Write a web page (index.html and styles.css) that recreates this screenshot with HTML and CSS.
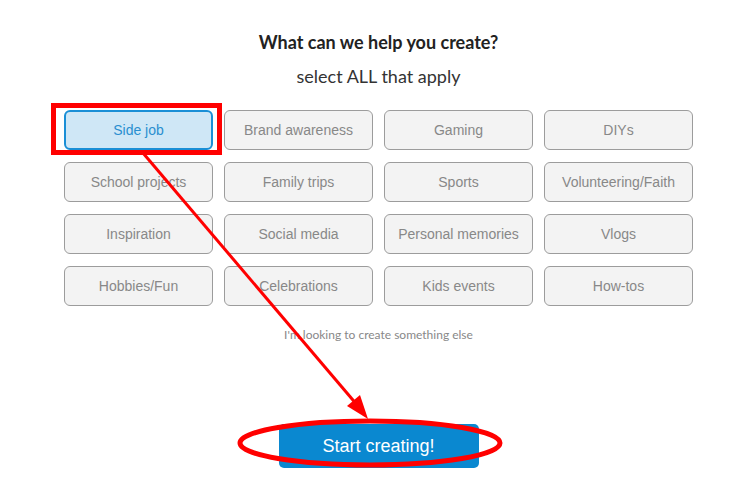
FILE: index.html
```html
<!DOCTYPE html>
<html lang="en">
<head>
    <meta charset="UTF-8">
    <meta name="viewport" content="width=device-width, initial-scale=1.0">
    <title>What can we help you create?</title>
    <link rel="stylesheet" href="styles.css">
</head>
<body>
    <div class="page">
        <div class="container">
            <h3 class="title">What can we help you create?</h3>
            <p class="subtitle">select ALL that apply</p>
            <div class="options">
                <button class="option selected">Side job</button>
                <button class="option">Brand awareness</button>
                <button class="option">Gaming</button>
                <button class="option">DIYs</button>
                <button class="option">School projects</button>
                <button class="option">Family trips</button>
                <button class="option">Sports</button>
                <button class="option">Volunteering/Faith</button>
                <button class="option">Inspiration</button>
                <button class="option">Social media</button>
                <button class="option">Personal memories</button>
                <button class="option">Vlogs</button>
                <button class="option">Hobbies/Fun</button>
                <button class="option">Celebrations</button>
                <button class="option">Kids events</button>
                <button class="option">How-tos</button>
            </div>
            <a class="other-link">I'm looking to create something else</a>
            <button class="start-button">Start creating!</button>
        </div>

        <!-- annotation drawn over the page -->
        <svg class="annotations" width="741" height="483" viewBox="0 0 741 483">
            <rect x="53.5" y="105.5" width="166" height="47" fill="none" stroke="#ff0000" stroke-width="5"/>
            <line x1="143" y1="153" x2="358" y2="406" stroke="#ff0000" stroke-width="3"/>
            <polygon points="368,419 347,406 360,395" fill="#ff0000"/>
            <ellipse cx="370" cy="443" rx="130" ry="22" fill="none" stroke="#ff0000" stroke-width="5"/>
        </svg>
    </div>
</body>
</html>
```

FILE: styles.css
```css
body {
    margin: 0;
    padding: 0;
    background-color: #fff;
    font-family: Lato, "Open Sans", sans-serif;
}

.page {
    position: relative;
    width: 741px;
    height: 483px;
    overflow: hidden;
}

.container {
    width: 629px;
    margin-left: 64px;
    padding-top: 30px;
    display: flex;
    flex-direction: column;
    align-items: center;
}

.title {
    margin: 0;
    font-size: 18px;
    line-height: 24px;
    font-weight: 700;
    color: #222;
}

.subtitle {
    margin: 10px 0 0;
    font-size: 18px;
    line-height: 24px;
    color: #333;
}

.options {
    margin-top: 22px;
    width: 100%;
    display: grid;
    grid-template-columns: repeat(4, 149px);
    column-gap: 11px;
    row-gap: 12px;
}

.option {
    height: 40px;
    padding: 0;
    background-color: #f3f3f3;
    border: 1px solid #9c9c9c;
    border-radius: 6px;
    font-family: "Liberation Sans", Arial, sans-serif;
    font-size: 14px;
    color: #888;
    cursor: pointer;
}

.option.selected {
    background-color: #cfe7f6;
    border: 2px solid #1a8fd6;
    color: #2a8fd0;
}

.other-link {
    margin-top: 21px;
    font-size: 12px;
    line-height: 16px;
    color: #888;
    cursor: pointer;
}

.start-button {
    margin-top: 81px;
    width: 200px;
    height: 44px;
    background-color: #0a88d0;
    border: none;
    border-radius: 5px;
    font-family: "Liberation Sans", Arial, sans-serif;
    font-size: 18px;
    color: #fff;
    cursor: pointer;
}

.annotations {
    position: absolute;
    top: 0;
    left: 0;
    pointer-events: none;
}
```
